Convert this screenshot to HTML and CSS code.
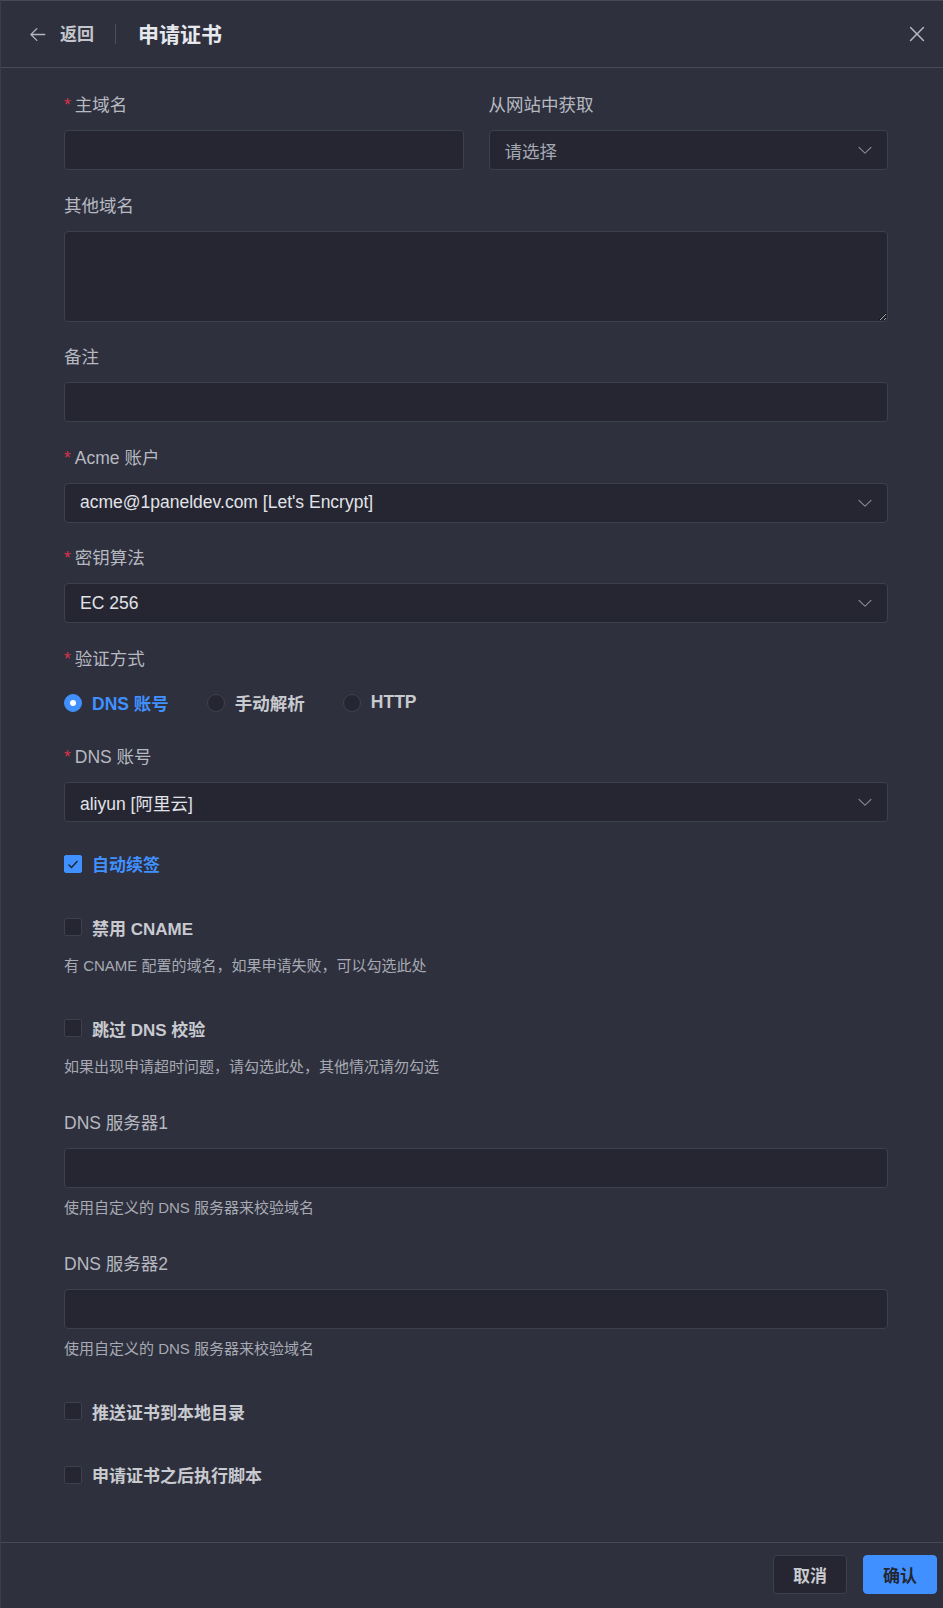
FILE: index.html
```html
<!DOCTYPE html>
<html lang="zh-CN">
<head>
<meta charset="utf-8">
<title>申请证书</title>
<link rel="stylesheet" href="styles.css">
</head>
<body>
<div class="drawer">
  <header class="drawer-header">
    <button class="back" type="button">
      <svg class="back-icon" viewBox="0 0 1024 1024" width="21" height="21"><path fill="currentColor" d="M224 480h640a32 32 0 1 1 0 64H224a32 32 0 0 1 0-64z"/><path fill="currentColor" d="m237.248 512 265.408 265.344a32 32 0 0 1-45.312 45.312l-288-288a32 32 0 0 1 0-45.312l288-288a32 32 0 1 1 45.312 45.312L237.248 512z"/></svg>
      <span>返回</span>
    </button>
    <span class="divider"></span>
    <h1 class="title">申请证书</h1>
    <button class="close" type="button">
      <svg viewBox="0 0 1024 1024" width="24" height="24"><path fill="currentColor" d="M764.288 214.592 512 466.88 259.712 214.592a31.936 31.936 0 0 0-45.12 45.12L466.752 512 214.528 764.224a31.936 31.936 0 1 0 45.12 45.184L512 557.184l252.288 252.288a31.936 31.936 0 0 0 45.12-45.12L557.12 512.064l252.288-252.352a31.936 31.936 0 1 0-45.12-45.184z"/></svg>
    </button>
  </header>

  <main class="drawer-body">
    <form class="form">
      <div class="item row-2">
        <div class="sub-item">
          <label class="label required">主域名</label>
          <input class="input" type="text">
        </div>
        <div class="sub-item">
          <label class="label">从网站中获取</label>
          <div class="input select"><span class="placeholder">请选择</span><svg class="chevron" viewBox="0 0 1024 1024" width="18" height="18"><path fill="currentColor" d="M831.872 340.864 512 652.672 192.128 340.864a30.592 30.592 0 0 0-42.752 0 29.12 29.12 0 0 0 0 41.6L489.664 714.24a32 32 0 0 0 44.672 0l340.288-331.712a29.12 29.12 0 0 0 0-41.728 30.592 30.592 0 0 0-42.752 0z"/></svg></div>
        </div>
      </div>

      <div class="item">
        <label class="label">其他域名</label>
        <textarea class="input textarea"></textarea>
      </div>

      <div class="item">
        <label class="label">备注</label>
        <input class="input" type="text">
      </div>

      <div class="item">
        <label class="label required">Acme 账户</label>
        <div class="input select"><span>acme@1paneldev.com [Let's Encrypt]</span><svg class="chevron" viewBox="0 0 1024 1024" width="18" height="18"><path fill="currentColor" d="M831.872 340.864 512 652.672 192.128 340.864a30.592 30.592 0 0 0-42.752 0 29.12 29.12 0 0 0 0 41.6L489.664 714.24a32 32 0 0 0 44.672 0l340.288-331.712a29.12 29.12 0 0 0 0-41.728 30.592 30.592 0 0 0-42.752 0z"/></svg></div>
      </div>

      <div class="item">
        <label class="label required">密钥算法</label>
        <div class="input select"><span>EC 256</span><svg class="chevron" viewBox="0 0 1024 1024" width="18" height="18"><path fill="currentColor" d="M831.872 340.864 512 652.672 192.128 340.864a30.592 30.592 0 0 0-42.752 0 29.12 29.12 0 0 0 0 41.6L489.664 714.24a32 32 0 0 0 44.672 0l340.288-331.712a29.12 29.12 0 0 0 0-41.728 30.592 30.592 0 0 0-42.752 0z"/></svg></div>
      </div>

      <div class="item">
        <label class="label required">验证方式</label>
        <div class="radio-group">
          <span class="radio checked"><span class="radio-dot"></span>DNS 账号</span>
          <span class="radio"><span class="radio-dot"></span>手动解析</span>
          <span class="radio"><span class="radio-dot"></span>HTTP</span>
        </div>
      </div>

      <div class="item">
        <label class="label required">DNS 账号</label>
        <div class="input select"><span>aliyun [阿里云]</span><svg class="chevron" viewBox="0 0 1024 1024" width="18" height="18"><path fill="currentColor" d="M831.872 340.864 512 652.672 192.128 340.864a30.592 30.592 0 0 0-42.752 0 29.12 29.12 0 0 0 0 41.6L489.664 714.24a32 32 0 0 0 44.672 0l340.288-331.712a29.12 29.12 0 0 0 0-41.728 30.592 30.592 0 0 0-42.752 0z"/></svg></div>
      </div>

      <div class="check-item">
        <span class="check checked"><span class="check-box"><svg viewBox="0 0 18 18" width="18" height="18"><polyline points="4.5,9.5 7.5,12.5 13.5,6" fill="none" stroke="#1d2230" stroke-width="1.3"/></svg></span>自动续签</span>
      </div>

      <div class="check-item">
        <span class="check"><span class="check-box"></span>禁用 CNAME</span>
        <div class="help">有 CNAME 配置的域名，如果申请失败，可以勾选此处</div>
      </div>

      <div class="check-item">
        <span class="check"><span class="check-box"></span>跳过 DNS 校验</span>
        <div class="help">如果出现申请超时问题，请勾选此处，其他情况请勿勾选</div>
      </div>

      <div class="item has-help">
        <label class="label">DNS 服务器1</label>
        <input class="input" type="text">
        <div class="help">使用自定义的 DNS 服务器来校验域名</div>
      </div>

      <div class="item has-help">
        <label class="label">DNS 服务器2</label>
        <input class="input" type="text">
        <div class="help">使用自定义的 DNS 服务器来校验域名</div>
      </div>

      <div class="check-item">
        <span class="check"><span class="check-box"></span>推送证书到本地目录</span>
      </div>

      <div class="check-item">
        <span class="check"><span class="check-box"></span>申请证书之后执行脚本</span>
      </div>
    </form>
  </main>

  <footer class="drawer-footer">
    <button class="btn btn-default" type="button">取消</button>
    <button class="btn btn-primary" type="button">确认</button>
  </footer>
</div>
</body>
</html>
```

FILE: styles.css
```css
* {
  box-sizing: border-box;
}

html,
body {
  margin: 0;
  padding: 0;
}

body {
  background: #2e303d;
  font-family: "Liberation Sans", "Noto Sans CJK SC", sans-serif;
  color: #b7b9c1;
  overflow: hidden;
}

.drawer {
  height: 1608px;
  display: flex;
  flex-direction: column;
  border-top: 1px solid #474954;
  border-left: 1px solid #3b3d49;
}

/* header */
.drawer-header {
  flex-shrink: 0;
  height: 67px;
  display: flex;
  align-items: center;
  padding: 0 14px 0 26px;
  border-bottom: 1px solid #474a57;
}

.back {
  display: flex;
  align-items: center;
  gap: 12px;
  background: none;
  border: 0;
  padding: 0;
  color: #c3c5cc;
  font-family: "Liberation Sans", "Noto Sans CJK SC", sans-serif;
  font-size: 17px;
  font-weight: 600;
  line-height: 1;
}

.back-icon {
  color: #b3b6be;
}

.divider {
  width: 1px;
  height: 20px;
  background: #4a4d5a;
  margin: 0 22px 0 21px;
}

.title {
  margin: 0;
  font-size: 21px;
  font-weight: 600;
  color: #e6e8ed;
  line-height: 1;
}

.close {
  margin-left: auto;
  background: none;
  border: 0;
  padding: 0;
  display: flex;
  color: #b7b9c1;
}

/* body */
.drawer-body {
  flex: 1;
  overflow: hidden;
  padding: 21px 55px 0 63px;
}

.form {
  display: flex;
  flex-direction: column;
}

.item {
  margin-bottom: 19.5px;
}

.item.has-help {
  margin-bottom: 25.5px;
}

.row-2 {
  display: grid;
  grid-template-columns: 1fr 1fr;
  column-gap: 25px;
}

.label {
  display: block;
  font-size: 17.5px;
  line-height: 32px;
  height: 32px;
  margin-bottom: 9px;
  color: #b7b9c1;
}

.label.required::before {
  content: "*";
  color: #d6334a;
  margin-right: 4px;
}

.input {
  display: block;
  width: 100%;
  height: 40px;
  margin: 0;
  background: #252631;
  border: 1px solid #3d404d;
  border-radius: 4px;
  padding: 0 15px;
  font-family: "Liberation Sans", "Noto Sans CJK SC", sans-serif;
  font-size: 17.5px;
  color: #e1e3e8;
  outline: none;
}

.textarea {
  height: 91px;
  padding: 8px 15px;
  resize: vertical;
}

.select {
  display: flex;
  align-items: center;
  justify-content: space-between;
  padding: 0 13px 0 15px;
}

.placeholder {
  color: #a4a8b3;
}

.chevron {
  color: #8b8e98;
  flex-shrink: 0;
}

/* radios */
.radio-group {
  display: flex;
  align-items: center;
  height: 38px;
}

.radio {
  display: flex;
  align-items: center;
  margin-right: 38px;
  font-size: 17.5px;
  font-weight: 600;
  color: #c8cad0;
}

.radio-dot {
  width: 18px;
  height: 18px;
  border-radius: 50%;
  border: 1px solid #3d404d;
  background: #252631;
  margin-right: 10px;
  display: flex;
  align-items: center;
  justify-content: center;
}

.radio.checked {
  color: #4090ff;
}

.radio.checked .radio-dot {
  background: #4090ff;
  border-color: #4090ff;
}

.radio.checked .radio-dot::after {
  content: "";
  width: 6px;
  height: 6px;
  border-radius: 50%;
  background: #ffffff;
}

/* checkboxes */
.check-item {
  margin-top: 6px;
  margin-bottom: 25.5px;
}

.check {
  display: flex;
  align-items: center;
  height: 32px;
  font-size: 17px;
  font-weight: 600;
  color: #c8cad0;
}

.check-box {
  width: 18px;
  height: 18px;
  border: 1px solid #3d404d;
  background: #252631;
  border-radius: 2px;
  margin-right: 10px;
  display: flex;
  align-items: center;
  justify-content: center;
  overflow: hidden;
}

.check-box svg {
  flex-shrink: 0;
}

.check.checked {
  color: #4090ff;
}

.check.checked .check-box {
  background: #4090ff;
  border-color: #4090ff;
}

.help {
  font-size: 15px;
  line-height: 20px;
  color: #a7aab3;
  margin-top: 10px;
  margin-bottom: 4.5px;
}

.check-item .help {
  margin-top: 13px;
}

/* footer */
.drawer-footer {
  flex-shrink: 0;
  height: 66px;
  display: flex;
  justify-content: flex-end;
  align-items: flex-start;
  gap: 16px;
  padding: 12px 6px 0 0;
  border-top: 1px solid #474a57;
}

.btn {
  width: 74px;
  height: 39px;
  border-radius: 4px;
  font-family: "Liberation Sans", "Noto Sans CJK SC", sans-serif;
  font-size: 17px;
  font-weight: 600;
  padding: 0;
}

.btn-default {
  background: #252631;
  border: 1px solid #3d404d;
  color: #c8cad0;
}

.btn-primary {
  background: #4090ff;
  border: 1px solid #4090ff;
  color: #232733;
}
```
